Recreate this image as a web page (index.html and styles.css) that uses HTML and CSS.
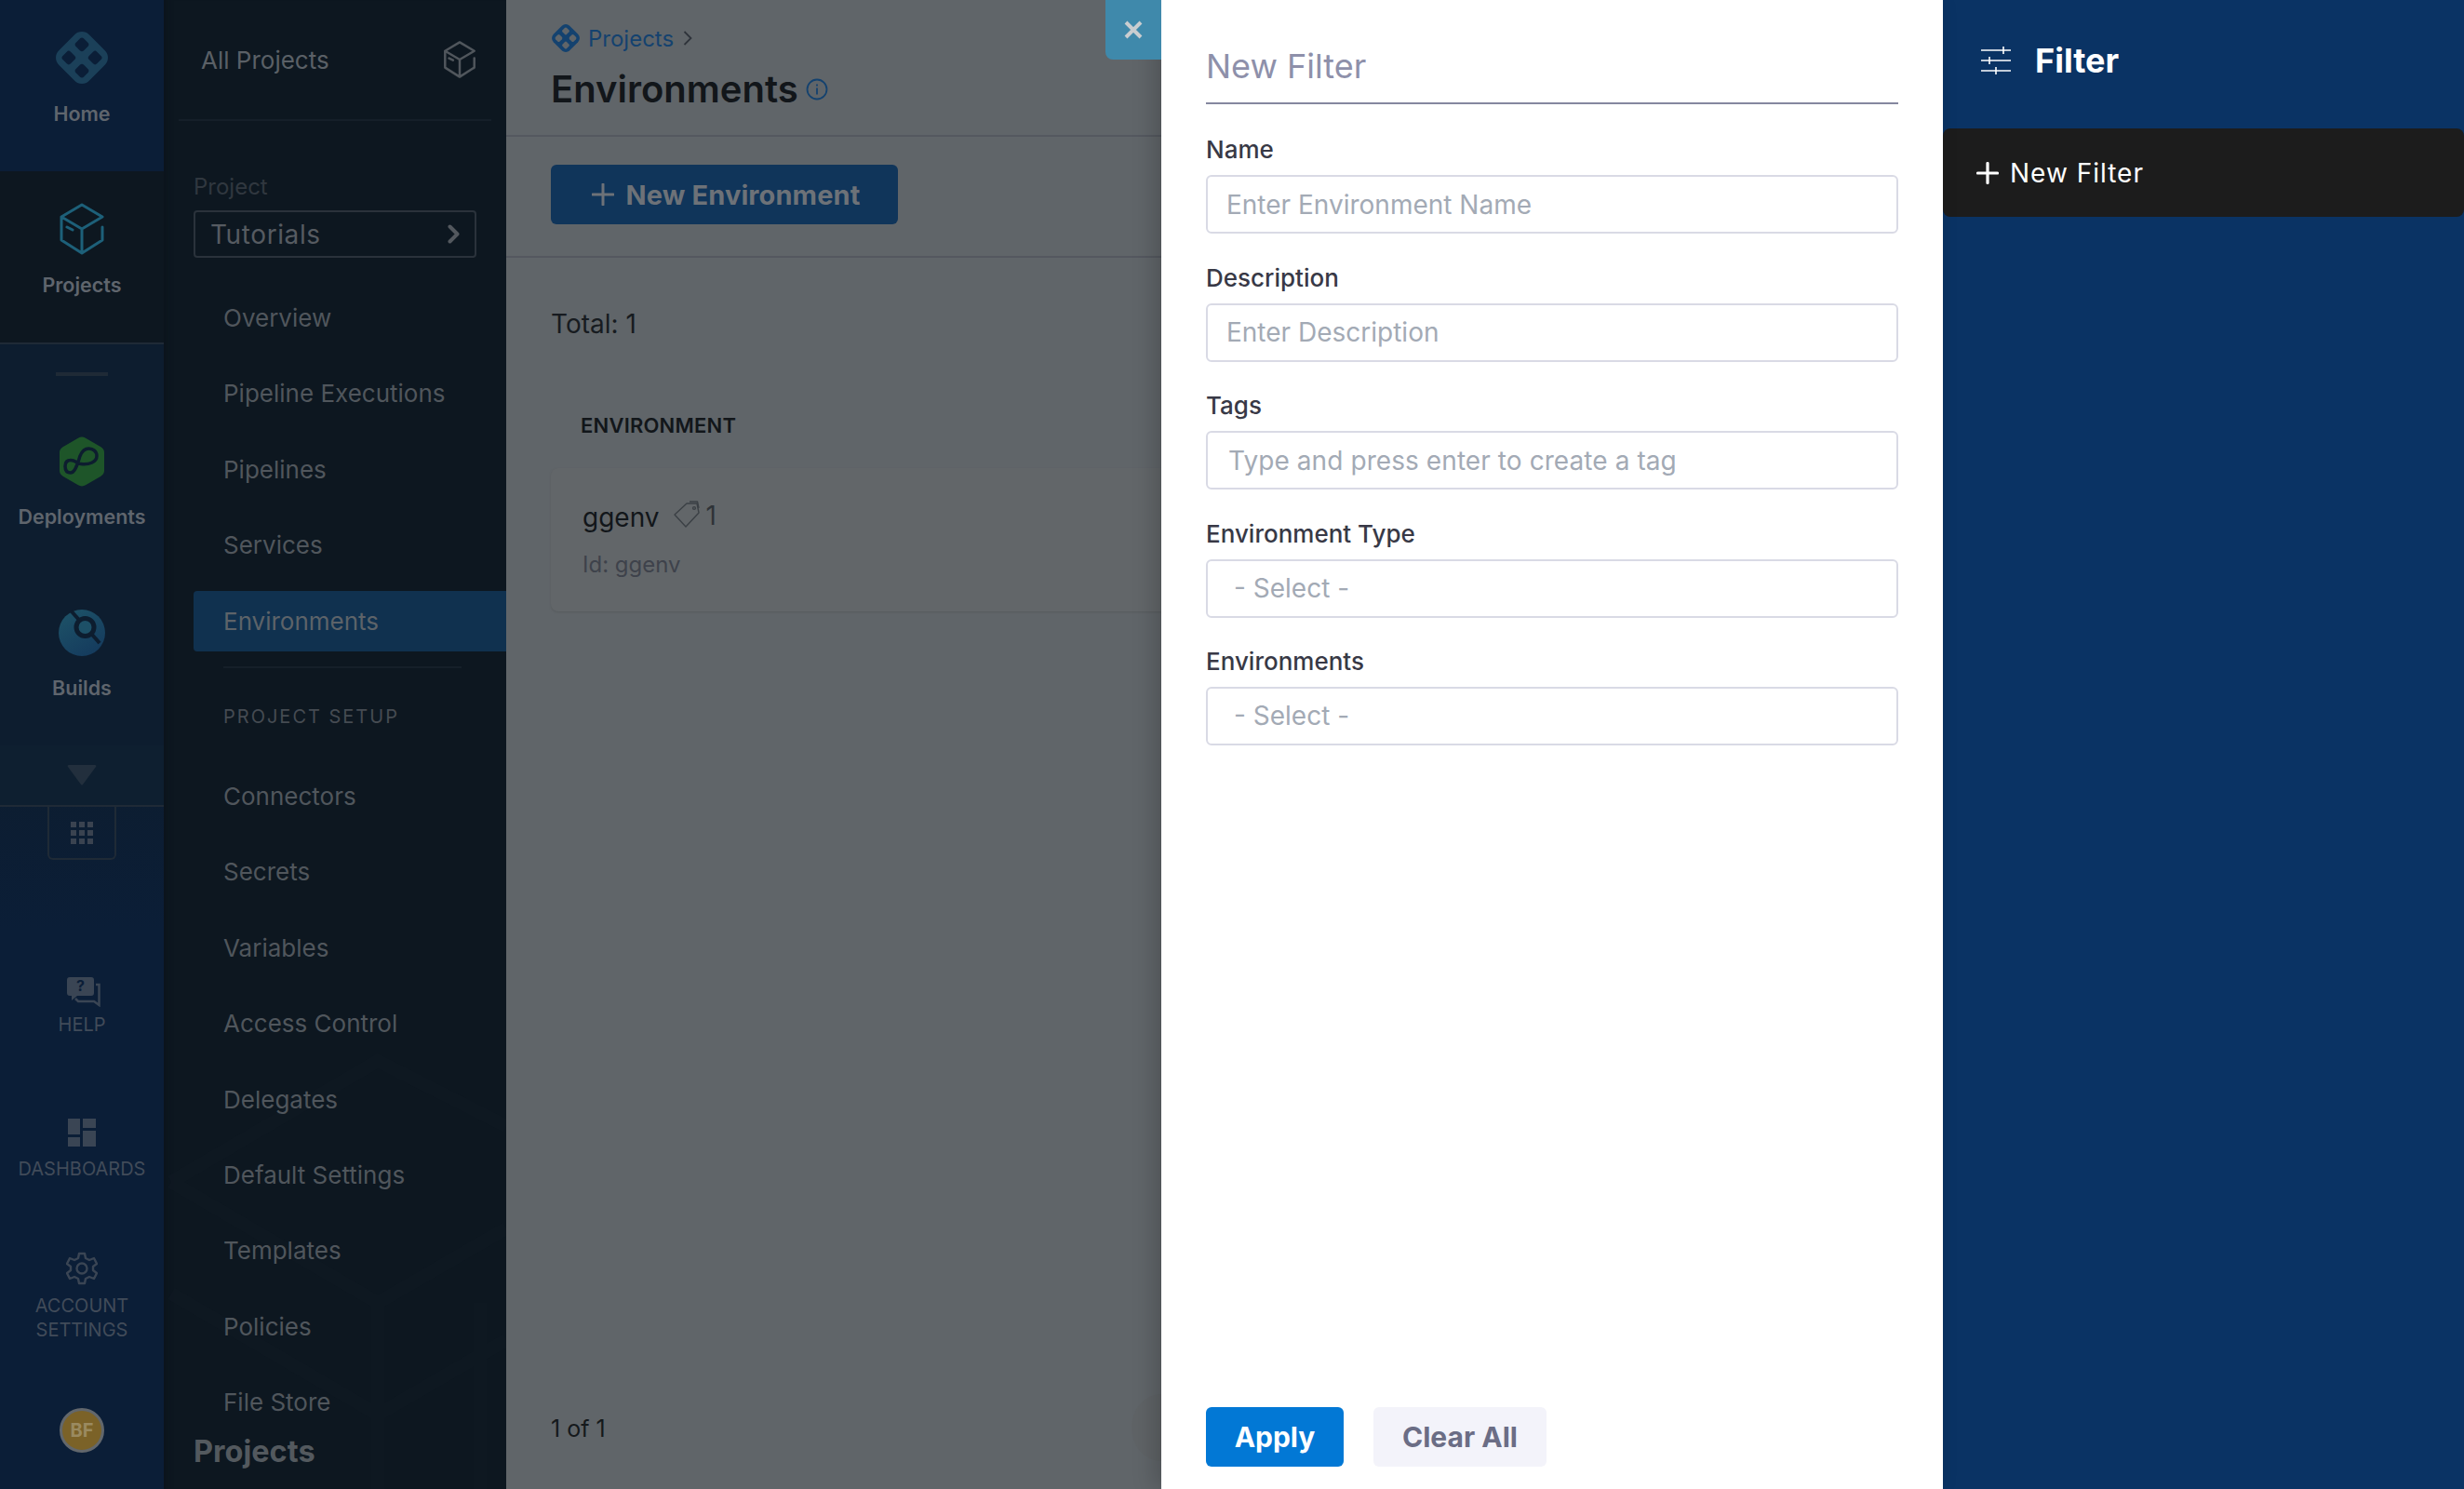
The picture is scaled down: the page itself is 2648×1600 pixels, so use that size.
FILE: index.html
```html
<!DOCTYPE html>
<html lang="en">
<head>
    <meta charset="UTF-8">
    <meta name="viewport" content="width=device-width, initial-scale=1.0">
    <title>Environments</title>
    <link rel="stylesheet" href="styles.css">
</head>
<body>
    <div class="app">
        <!-- module rail -->
        <nav class="rail">
            <a class="rail-item rail-home">
                <svg class="rail-icon" width="60" height="60" viewBox="0 0 60 60">
                    <g transform="rotate(45 30 30)">
                        <rect x="7" y="7" width="46" height="46" rx="11" fill="#1b4059"/>
                        <rect x="14" y="14" width="12" height="12" rx="3" fill="#0b1e37"/>
                        <rect x="34" y="14" width="12" height="12" rx="3" fill="#0b1e37"/>
                        <rect x="14" y="34" width="12" height="12" rx="3" fill="#0b1e37"/>
                        <rect x="34" y="34" width="12" height="12" rx="3" fill="#0b1e37"/>
                    </g>
                </svg>
                <span class="rail-name">Home</span>
            </a>
            <a class="rail-item rail-projects">
                <svg class="rail-icon" width="50" height="56" viewBox="0 0 50 56" fill="none" stroke="#1d6079" stroke-width="3" stroke-linejoin="round" stroke-linecap="round">
                    <path d="M47 26V40L25 54L3 40V15L25 2L47 15L25 28L3 15M25 28V54M9 26L15 29"/>
                </svg>
                <span class="rail-name">Projects</span>
            </a>
            <div class="rail-rule"></div>
            <a class="rail-item rail-deployments">
                <svg class="rail-icon" width="50" height="56" viewBox="0 0 50 56">
                    <path d="M25 1.500Q27 1.500 29 2.700L45 12Q49 14.500 49 18V38Q49 41.500 45 44L29 53.300Q25 55.500 21 53.300L5 44Q1 41.500 1 38V18Q1 14.500 5 12L21 2.700Q23 1.500 25 1.500Z" fill="#1e5529"/>
                    <path d="M13 40C8 40 7 36 7 33C7 29 9 26.500 13 26.500C18 26.500 20 30 24 30.500C32 31.500 41 29 41 22C41 17 37 14 32.500 14C27.500 14 25 17 23 22C21 28 18 40 13 40Z" fill="none" stroke="#0d1d2f" stroke-width="3.500"/>
                </svg>
                <span class="rail-name">Deployments</span>
            </a>
            <a class="rail-item rail-builds">
                <svg class="rail-icon" width="50" height="52" viewBox="0 0 50 52">
                    <defs>
                        <linearGradient id="buildFill" x1="0" y1="0" x2="0.6" y2="1">
                            <stop offset="0" stop-color="#1e5468"/>
                            <stop offset="1" stop-color="#153c5e"/>
                        </linearGradient>
                    </defs>
                    <circle cx="25" cy="26" r="25" fill="url(#buildFill)"/>
                    <path d="M13 2L44 37" stroke="#0d1d2f" stroke-width="4"/>
                    <circle cx="28.500" cy="20" r="9.500" fill="#1d5067" stroke="#0d1d2f" stroke-width="5"/>
                </svg>
                <span class="rail-name">Builds</span>
            </a>
            <div class="rail-more">
                <svg width="32" height="22" viewBox="0 0 32 22"><path d="M2 0H30Q32 0 31 2L17 21Q16 22 15 21L1 2Q0 0 2 0Z" fill="#222f3d"/></svg>
            </div>
            <div class="rail-grid">
                <svg width="24" height="24" viewBox="0 0 24 24" fill="#3a4350">
                    <rect width="6" height="6"/><rect x="9" width="6" height="6"/><rect x="18" width="6" height="6"/>
                    <rect y="9" width="6" height="6"/><rect x="9" y="9" width="6" height="6"/><rect x="18" y="9" width="6" height="6"/>
                    <rect y="18" width="6" height="6"/><rect x="9" y="18" width="6" height="6"/><rect x="18" y="18" width="6" height="6"/>
                </svg>
            </div>
            <a class="rail-item rail-help">
                <svg class="help-icon" width="36" height="32" viewBox="0 0 36 32">
                    <path d="M3 0H26Q29 0 29 3V17Q29 20 26 20H11L5 25V20H3Q0 20 0 17V3Q0 0 3 0Z" fill="#3a4554"/>
                    <path d="M31 8H34.500V30L29 26H12L9 23" fill="none" stroke="#3a4554" stroke-width="2.500"/>
                    <text x="14.500" y="15" class="help-mark">?</text>
                </svg>
                <span class="rail-small">HELP</span>
            </a>
            <a class="rail-item rail-dash">
                <svg width="30" height="30" viewBox="0 0 30 30" fill="#3a4554">
                    <rect width="13" height="17"/><rect x="16" width="14" height="10"/><rect y="20" width="13" height="10"/><rect x="16" y="13" width="14" height="17"/>
                </svg>
                <span class="rail-small">DASHBOARDS</span>
            </a>
            <a class="rail-item rail-account">
                <svg width="34" height="36" viewBox="0 0 34 36" fill="none" stroke="#3a4554" stroke-width="2.400" stroke-linejoin="round">
                    <path d="M14 2H20L21 7L25 9L30 7L33 13L29 16V20L33 23L30 29L25 27L21 29L20 34H14L13 29L9 27L4 29L1 23L5 20V16L1 13L4 7L9 9L13 7Z"/>
                    <circle cx="17" cy="18" r="5.500"/>
                </svg>
                <span class="rail-small">ACCOUNT<br>SETTINGS</span>
            </a>
            <div class="avatar">BF</div>
        </nav>

        <!-- project side menu -->
        <aside class="side">
            <svg class="side-watermark" width="368" height="500" viewBox="0 0 368 500" fill="none" stroke="#121b25" stroke-width="14">
                <path d="M8 170L230 40L368 110M8 170L230 300L368 220M8 290L230 420L368 340M340 300V500M230 300V500"/>
            </svg>
            <div class="side-head">
                <span>All Projects</span>
                <svg width="36" height="40" viewBox="0 0 50 56" fill="none" stroke="#50565c" stroke-width="3.500" stroke-linejoin="round" stroke-linecap="round">
                    <path d="M47 26V40L25 54L3 40V15L25 2L47 15L25 28L3 15M25 28V54M9 26L15 29"/>
                </svg>
            </div>
            <div class="project-label">Project</div>
            <div class="project-box">
                <span>Tutorials</span>
                <svg width="13" height="21" viewBox="0 0 13 21" fill="none" stroke="#53585e" stroke-width="4" stroke-linecap="round" stroke-linejoin="round"><path d="M2.500 2.500L10.500 10.500L2.500 18.500"/></svg>
            </div>
            <ul class="side-list">
                <li>Overview</li>
                <li>Pipeline Executions</li>
                <li>Pipelines</li>
                <li>Services</li>
                <li class="active">Environments</li>
            </ul>
            <div class="side-rule"></div>
            <div class="side-section">PROJECT SETUP</div>
            <ul class="side-list">
                <li>Connectors</li>
                <li>Secrets</li>
                <li>Variables</li>
                <li>Access Control</li>
                <li>Delegates</li>
                <li>Default Settings</li>
                <li>Templates</li>
                <li>Policies</li>
                <li>File Store</li>
            </ul>
            <div class="side-overlay-title">Projects</div>
        </aside>

        <!-- dimmed page behind the drawer -->
        <main class="main">
            <header class="page-head">
                <div class="crumb">
                    <svg width="32" height="32" viewBox="0 0 60 60">
                        <g transform="rotate(45 30 30)">
                            <rect x="7" y="7" width="46" height="46" rx="11" fill="#14426f"/>
                            <rect x="14" y="14" width="12" height="12" rx="3" fill="#606569"/>
                            <rect x="34" y="14" width="12" height="12" rx="3" fill="#606569"/>
                            <rect x="14" y="34" width="12" height="12" rx="3" fill="#606569"/>
                            <rect x="34" y="34" width="12" height="12" rx="3" fill="#606569"/>
                        </g>
                    </svg>
                    <span>Projects</span>
                    <svg width="10" height="16" viewBox="0 0 10 16" fill="none" stroke="#2f343b" stroke-width="1.800"><path d="M1.500 1L8.500 8L1.500 15"/></svg>
                </div>
                <h1 class="page-title">
                    Environments
                    <svg width="24" height="24" viewBox="0 0 24 24" fill="none" stroke="#14426f" stroke-width="1.800"><circle cx="12" cy="12" r="10.500"/><path d="M12 10.500V17.500M12 6.500V8.500"/></svg>
                </h1>
            </header>
            <div class="toolbar">
                <button class="new-env">
                    <svg width="24" height="24" viewBox="0 0 24 24" stroke="#6d7278" stroke-width="3" stroke-linecap="round"><path d="M12 1V23M1 12H23"/></svg>
                    New Environment
                </button>
            </div>
            <div class="total">Total: 1</div>
            <div class="col-head">ENVIRONMENT</div>
            <div class="env-card">
                <div class="env-name">
                    ggenv
                    <svg class="tag-icon" width="30" height="30" viewBox="0 0 30 30" fill="none" stroke="#3b4045" stroke-width="1.400" stroke-linejoin="round">
                        <path d="M15 3H26L28 13L14 28L2 15Z"/><path d="M18 1H26.500L28 8"/><circle cx="23" cy="8" r="1.400"/>
                    </svg>
                    <span class="tag-count">1</span>
                </div>
                <div class="env-id">Id: ggenv</div>
            </div>
            <div class="pager">1 of 1</div>
            <div class="pager-round"></div>
        </main>

        <!-- filter drawer -->
        <section class="drawer">
            <button class="drawer-close">
                <svg width="20" height="20" viewBox="0 0 20 20" stroke="#c9cdd0" stroke-width="4"><path d="M2 2L18 18M18 2L2 18"/></svg>
            </button>
            <h2 class="drawer-title">New Filter</h2>
            <form class="filter-form">
                <div class="field">
                    <label>Name</label>
                    <input type="text" placeholder="Enter Environment Name">
                </div>
                <div class="field">
                    <label>Description</label>
                    <input type="text" placeholder="Enter Description">
                </div>
                <div class="field">
                    <label>Tags</label>
                    <input class="tag-input" type="text" placeholder="Type and press enter to create a tag">
                </div>
                <div class="field">
                    <label>Environment Type</label>
                    <div class="select">- Select -</div>
                </div>
                <div class="field">
                    <label>Environments</label>
                    <div class="select">- Select -</div>
                </div>
            </form>
            <div class="drawer-actions">
                <button class="btn-apply">Apply</button>
                <button class="btn-clear">Clear All</button>
            </div>
        </section>

        <!-- saved filters -->
        <section class="filters">
            <div class="filters-head">
                <svg width="32" height="32" viewBox="0 0 32 32" stroke="#fff" stroke-width="1.600"><path d="M0 5H32M0 16H32M0 27H32M24 1V9M9 12V20M16 23V31"/></svg>
                <span>Filter</span>
            </div>
            <div class="filters-new">
                <svg width="24" height="24" viewBox="0 0 24 24" stroke="#fff" stroke-width="3.200" stroke-linecap="round"><path d="M12 1.500V22.500M1.500 12H22.500"/></svg>
                <span>New Filter</span>
            </div>
        </section>
    </div>
</body>
</html>
```

FILE: styles.css
```css
* {
    box-sizing: border-box;
}

body {
    margin: 0;
    background-color: #606569;
    font-family: "Inter", "Noto Sans", sans-serif;
}

ul {
    list-style-type: none;
    margin: 0;
    padding: 0;
}

h1, h2 {
    margin: 0;
}

.app {
    display: flex;
    width: 2648px;
    height: 1600px;
    overflow: hidden;
}

/* module rail */
.rail {
    display: flex;
    flex-direction: column;
    align-items: center;
    flex: 0 0 176px;
    background: linear-gradient(#0d1d2f 0, #0d1d2f 800px, #0b1e37 1000px);
}

.rail-item {
    display: flex;
    flex-direction: column;
    align-items: center;
    width: 100%;
    text-align: center;
}

.rail-icon {
    display: block;
}

.rail-name {
    color: #5f656d;
    font-size: 21.5px;
    font-weight: 600;
    line-height: 28px;
    white-space: nowrap;
}

.rail-home {
    height: 184px;
    padding-top: 32px;
    background-color: #0b1e37;
}

.rail-home .rail-name {
    margin-top: 16px;
}

.rail-projects {
    height: 186px;
    padding-top: 34px;
    background-color: #0d1720;
    border-bottom: 2px solid #1f2a36;
}

.rail-projects .rail-name {
    margin-top: 18px;
}

.rail-rule {
    width: 56px;
    height: 4px;
    margin-top: 30px;
    background-color: #1f2a36;
}

.rail-deployments {
    margin-top: 64px;
}

.rail-deployments .rail-name {
    margin-top: 17px;
}

.rail-builds {
    margin-top: 85px;
}

.rail-builds .rail-name {
    margin-top: 19px;
}

.rail-more {
    display: flex;
    align-items: center;
    justify-content: center;
    width: 100%;
    height: 66px;
    margin-top: 48px;
    background-color: #0e1f30;
    border-bottom: 2px solid #1f2a36;
}

.rail-grid {
    display: flex;
    align-items: center;
    justify-content: center;
    flex: none;
    width: 74px;
    height: 57px;
    border: 2px solid #1f2a36;
    border-top: none;
    border-radius: 0 0 6px 6px;
}

.rail-small {
    color: #414b59;
    font-size: 20px;
    line-height: 26px;
    white-space: nowrap;
}

.rail-help {
    margin-top: 126px;
}

.help-icon {
    margin-left: 4px;
}

.rail-help .rail-small {
    margin-top: 6px;
}

.help-mark {
    fill: #0b1e37;
    font-size: 16px;
    font-weight: 700;
    text-anchor: middle;
}

.rail-dash {
    margin-top: 88px;
}

.rail-dash .rail-small {
    margin-top: 11px;
}

.rail-account {
    margin-top: 76px;
}

.rail-account .rail-small {
    margin-top: 9px;
}

.avatar {
    display: flex;
    align-items: center;
    justify-content: center;
    flex: none;
    width: 48px;
    height: 48px;
    margin-top: 71px;
    border: 3px solid #62676c;
    border-radius: 50%;
    background-color: #7b6228;
    color: #9a8a60;
    font-size: 20px;
    font-weight: 700;
}

/* project side menu */
.side {
    position: relative;
    flex: 0 0 368px;
    overflow: hidden;
    background-color: #0d1720;
    box-shadow: inset 10px 0 10px -10px #0a121a;
}

.side-watermark {
    position: absolute;
    left: 0;
    top: 1100px;
    opacity: 0.35;
}

.side-head {
    position: relative;
    display: flex;
    align-items: center;
    justify-content: space-between;
    height: 130px;
    margin: 0 16px;
    padding: 0 16px 0 24px;
    border-bottom: 2px solid #151f29;
    color: #5a6066;
    font-size: 26px;
}

.project-label {
    position: relative;
    margin: 56px 0 0 32px;
    color: #30373f;
    font-size: 24px;
    line-height: 30px;
}

.project-box {
    position: relative;
    display: flex;
    align-items: center;
    justify-content: space-between;
    width: 304px;
    height: 51px;
    margin: 10px 0 0 32px;
    padding: 0 16px;
    border: 2px solid #2a323b;
    border-radius: 4px;
    color: #565b61;
    font-size: 28px;
    letter-spacing: 0.6px;
}

.side-list {
    position: relative;
    display: flex;
    flex-direction: column;
    gap: 16.4px;
    margin-left: 32px;
}

.project-box + .side-list {
    margin-top: 32px;
}

.side-list li {
    height: 65px;
    padding-left: 32px;
    border-radius: 4px 0 0 4px;
    color: #50565c;
    font-size: 26px;
    line-height: 66px;
    white-space: nowrap;
}

.side-list li.active {
    background-color: #10314f;
    color: #5d6369;
}

.side-rule {
    position: relative;
    height: 2px;
    margin: 16px 48px 0 64px;
    width: 256px;
    background-color: #151f29;
}

.side-section {
    position: relative;
    margin: 38.7px 0 38.7px 64px;
    color: #454b52;
    font-size: 20px;
    line-height: 28px;
    letter-spacing: 2px;
}

.side-overlay-title {
    position: absolute;
    left: 32px;
    bottom: 20px;
    color: #53595e;
    font-size: 32.5px;
    font-weight: 700;
    line-height: 40px;
}

/* dimmed page */
.main {
    position: relative;
    display: flex;
    flex-direction: column;
    flex: 0 0 704px;
    background-color: #606569;
    color: #12161a;
}

.page-head {
    height: 147px;
    padding: 25px 0 0 48px;
    border-bottom: 2px solid #54585f;
}

.crumb {
    display: flex;
    align-items: center;
    gap: 8px;
    height: 32px;
    color: #14426f;
    font-size: 24px;
}

.crumb svg:last-child {
    margin-left: 2px;
}

.page-title {
    display: flex;
    align-items: center;
    gap: 8px;
    height: 48px;
    margin-top: 14px;
    font-size: 40px;
    font-weight: 600;
}

.page-title svg {
    margin-top: 2px;
}

.toolbar {
    height: 130px;
    padding: 30px 0 0 48px;
    border-bottom: 2px solid #54585f;
}

.new-env {
    display: flex;
    align-items: center;
    justify-content: center;
    gap: 13px;
    width: 373px;
    height: 64px;
    padding: 0 0 0 3px;
    border: none;
    border-radius: 6px;
    background-color: #10355a;
    color: #6d7278;
    font-family: inherit;
    font-size: 29px;
    font-weight: 700;
    letter-spacing: 0.1px;
}

.total {
    margin: 54px 0 0 48px;
    font-size: 28px;
    line-height: 34px;
    color: #171b20;
}

.col-head {
    margin: 78px 0 0 80px;
    font-size: 22px;
    font-weight: 600;
    line-height: 28px;
    letter-spacing: 0.2px;
}

.env-card {
    height: 154px;
    margin: 32px 0 0 48px;
    padding: 35px 0 0 34px;
    border-radius: 8px 0 0 8px;
    background-color: #626669;
    box-shadow: 0 1px 2px #575b5e;
}

.env-name {
    display: flex;
    align-items: center;
    height: 36px;
    font-size: 28px;
}

.tag-icon {
    margin: -6px 0 0 14px;
}

.tag-count {
    margin: -4px 0 0 6px;
    color: #2f3338;
    font-size: 28px;
}

.env-id {
    margin-top: 18px;
    color: #3e424b;
    font-size: 24px;
    line-height: 30px;
}

.pager {
    margin: auto 0 50px 48px;
    font-size: 25px;
    line-height: 30px;
    color: #15191c;
}

.pager-round {
    position: absolute;
    right: -32px;
    bottom: 30px;
    width: 64px;
    height: 72px;
    border-radius: 50%;
    background-color: #5f6366;
}

/* filter drawer */
.drawer {
    position: relative;
    display: flex;
    flex-direction: column;
    flex: 0 0 840px;
    padding: 48px 48px 24px;
    background-color: #fff;
    box-shadow: -8px 0 22px rgba(0, 0, 0, 0.18);
}

.drawer-close {
    position: absolute;
    left: -60px;
    top: 0;
    display: flex;
    align-items: center;
    justify-content: center;
    width: 60px;
    height: 64px;
    padding: 0;
    border: none;
    border-radius: 0 0 0 8px;
    background-color: #3f89ab;
}

.drawer-title {
    height: 64px;
    border-bottom: 2px solid #85879f;
    color: #8e90aa;
    font-size: 36px;
    font-weight: 400;
    line-height: 47px;
}

.filter-form {
    display: flex;
    flex-direction: column;
    gap: 32.5px;
    margin-top: 34px;
}

.field label {
    display: block;
    margin-bottom: 12px;
    color: #383946;
    font-size: 26px;
    font-weight: 500;
    line-height: 30px;
}

.field input, .select {
    display: block;
    width: 100%;
    height: 63px;
    padding: 0 20px;
    border: 2px solid #d9dae5;
    border-radius: 6px;
    background-color: #fff;
    font-family: inherit;
    font-size: 28px;
    line-height: 59px;
}

.field input::placeholder {
    color: #a3aab5;
    opacity: 1;
}

.field .tag-input {
    padding-left: 22px;
    letter-spacing: 0.08px;
}

.select {
    padding-left: 28px;
    color: #a3aab5;
}

.drawer-actions {
    display: flex;
    gap: 32px;
    margin-top: auto;
}

.drawer-actions button {
    height: 64px;
    border: none;
    border-radius: 6px;
    font-family: inherit;
    font-size: 30px;
    font-weight: 700;
}

.btn-apply {
    width: 148px;
    background-color: #0278d5;
    color: #fff;
}

.btn-clear {
    width: 186px;
    background-color: #f3f3fa;
    color: #6b6d85;
}

/* saved filters */
.filters {
    flex: 1;
    background-color: #0a3364;
    color: #fff;
}

.filters-head {
    display: flex;
    align-items: center;
    gap: 26px;
    height: 130px;
    margin-bottom: 8px;
    padding-left: 41px;
    font-size: 36px;
    font-weight: 700;
}

.filters-new {
    display: flex;
    align-items: center;
    gap: 12px;
    height: 95px;
    padding-left: 36px;
    border-radius: 8px;
    background-color: #1c1c1c;
    font-size: 28px;
    letter-spacing: 1px;
}
```
